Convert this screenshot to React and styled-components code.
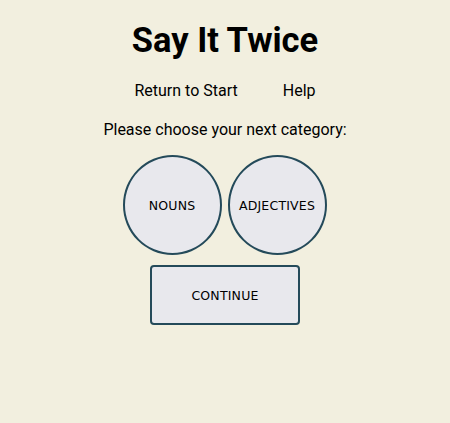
import React from "react";
import styled, { createGlobalStyle } from "styled-components";

const Global = createGlobalStyle`
  html, body { margin: 0; padding: 0; background: #f2efdf; }
  body { font-family: Roboto, "Liberation Sans", sans-serif; color: #000; }
`;

const Page = styled.main`
  display: flex;
  flex-direction: column;
  align-items: center;
  min-height: 423px;
`;

const Title = styled.h1`
  margin: 21px 0 0;
  font-size: 34.5px;
  font-weight: 700;
  line-height: 38px;
`;

const Nav = styled.nav`
  display: flex;
  gap: 45px;
  margin-top: 22px;
  font-size: 16px;
  line-height: 19px;
`;

const NavLink = styled.a`
  color: #000;
  text-decoration: none;
  cursor: pointer;
`;

const Prompt = styled.p`
  margin: 20px 0 0;
  font-size: 16px;
  line-height: 19px;
`;

const Choices = styled.div`
  display: flex;
  gap: 6px;
  margin-top: 16px;
  margin-right: 1px;
`;

const BaseButton = styled.button`
  box-sizing: border-box;
  background: #e8e8ed;
  border: 2px solid #244a5a;
  color: #000;
  font-family: "DejaVu Sans", sans-serif;
  font-size: 12.5px;
  font-weight: 400;
  letter-spacing: 0.2px;
  padding: 0;
  cursor: pointer;
`;

const Circle = styled(BaseButton)`
  width: 99px;
  height: 100px;
  border-radius: 50%;
`;

const Continue = styled(BaseButton)`
  width: 150px;
  height: 60px;
  border-radius: 4px;
  margin-top: 10px;
`;

export default function App() {
  return (
    <>
      <Global />
      <Page>
        <Title>Say It Twice</Title>
        <Nav>
          <NavLink>Return to Start</NavLink>
          <NavLink>Help</NavLink>
        </Nav>
        <Prompt>Please choose your next category:</Prompt>
        <Choices>
          <Circle>NOUNS</Circle>
          <Circle>ADJECTIVES</Circle>
        </Choices>
        <Continue>CONTINUE</Continue>
      </Page>
    </>
  );
}
